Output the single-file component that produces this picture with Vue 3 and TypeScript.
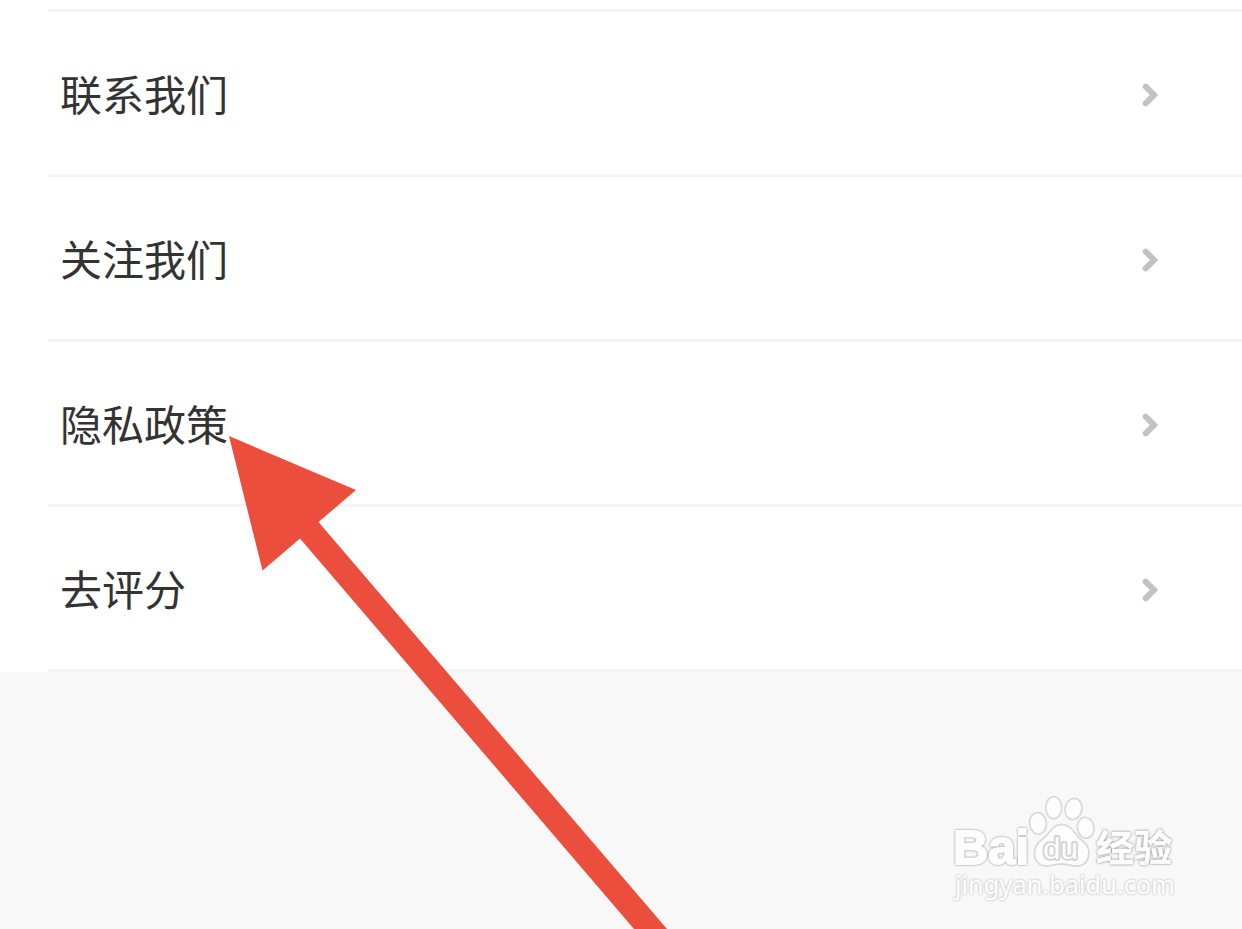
<script setup lang="ts">
interface MenuItem {
  id: string
  label: string
}

const items: MenuItem[] = [
  { id: 'contact', label: '联系我们' },
  { id: 'follow', label: '关注我们' },
  { id: 'privacy', label: '隐私政策' },
  { id: 'rate', label: '去评分' },
]
</script>

<template>
  <main class="screen">
    <section class="panel">
      <div class="lead"></div>
      <ul class="list">
        <li v-for="item in items" :key="item.id" class="row">
          <span class="label">{{ item.label }}</span>
          <svg class="chevron" width="20" height="30" viewBox="0 0 20 30" aria-hidden="true">
            <path d="M5.7 6.6 L14 15 L5.7 23.4" />
          </svg>
        </li>
      </ul>
    </section>

    <svg class="pointer" width="1242" height="929" viewBox="0 0 1242 929" aria-hidden="true">
      <polygon points="229,436 356,490 318.5,522 667,929 634,929 300,538.5 262.5,570.5" />
    </svg>

    <svg class="watermark" width="250" height="125" viewBox="0 0 250 125">
      <text class="brand" x="13" y="79" textLength="76" lengthAdjust="spacingAndGlyphs">Bai</text>
      <g class="paw">
        <ellipse cx="98" cy="38.3" rx="8.4" ry="10.8" transform="rotate(-6 98 38.3)" />
        <ellipse cx="113.7" cy="22.7" rx="8" ry="11.1" />
        <ellipse cx="133.5" cy="24" rx="8.4" ry="10.7" transform="rotate(12 133.5 24)" />
        <ellipse cx="145.7" cy="42.8" rx="8.4" ry="10.5" transform="rotate(-8 145.7 42.8)" />
        <path d="M121.5 39.5 C112 39.5 111 48 102 54.5 C96 59 94 63 94.5 69 C95 77 100 81.3 107 81 C113 80.8 116 79 122 79 C128 79 132 81.3 138 81 C145 80.5 149 75 149 67.5 C149 61 145 58 140.5 54 C133 47 131 39.5 121.5 39.5 Z" />
      </g>
      <text class="inner" x="103" y="73.5" textLength="35" lengthAdjust="spacingAndGlyphs">du</text>
      <text class="cjk" x="156" y="76.5" textLength="76" lengthAdjust="spacingAndGlyphs">经验</text>
      <text class="site" x="15" y="109" textLength="220" lengthAdjust="spacingAndGlyphs">jingyan.baidu.com</text>
    </svg>
  </main>
</template>

<style>
body {
  margin: 0;
  overflow: hidden;
}
</style>

<style scoped>
.screen {
  position: relative;
  width: 1242px;
  height: 929px;
  overflow: hidden;
  background: #f8f8f8;
  font-family: "Liberation Sans", "Noto Sans CJK SC", sans-serif;
}

.panel {
  background: #fff;
}

.lead {
  box-sizing: border-box;
  height: 12px;
  margin-left: 48px;
  border-bottom: 3px solid #f4f4f4;
}

.list {
  margin: 0;
  padding: 0 0 0 48px;
  list-style: none;
}

.row {
  box-sizing: border-box;
  display: flex;
  align-items: center;
  justify-content: space-between;
  height: 165px;
  padding: 0 82px 0 12px;
  border-bottom: 3px solid #f4f4f4;
}

.label {
  color: #333;
  font-family: "Noto Sans CJK SC", sans-serif;
  font-size: 42px;
  line-height: 60px;
}

.chevron {
  margin-top: 4px;
}

.chevron path {
  fill: none;
  stroke: #c2c2c2;
  stroke-width: 6;
  stroke-linecap: round;
  stroke-linejoin: miter;
}

.pointer {
  position: absolute;
  top: 0;
  left: 0;
  fill: #eb4e3d;
}

.watermark {
  position: absolute;
  top: 785px;
  left: 940px;
  fill: #fdfdfd;
}

.brand {
  font: 700 49px "Liberation Sans", sans-serif;
  stroke: #fdfdfd;
  stroke-width: 2;
  filter: drop-shadow(0 0 1px #888);
}

.paw {
  stroke: #dadada;
  stroke-width: 1.8;
}

.inner {
  font: 400 29px "Liberation Sans", sans-serif;
  stroke: #d2d2d2;
  stroke-width: 3.4;
  stroke-linejoin: round;
  paint-order: stroke;
}

.cjk {
  font: 700 37px "Noto Sans CJK SC", sans-serif;
  stroke: #fdfdfd;
  stroke-width: 0.6;
  filter: drop-shadow(0 0 1px #777);
}

.site {
  font: 400 25px "Noto Sans", sans-serif;
  stroke: #fdfdfd;
  stroke-width: 0.3;
  filter: drop-shadow(0 0 1px #aaa);
}
</style>
